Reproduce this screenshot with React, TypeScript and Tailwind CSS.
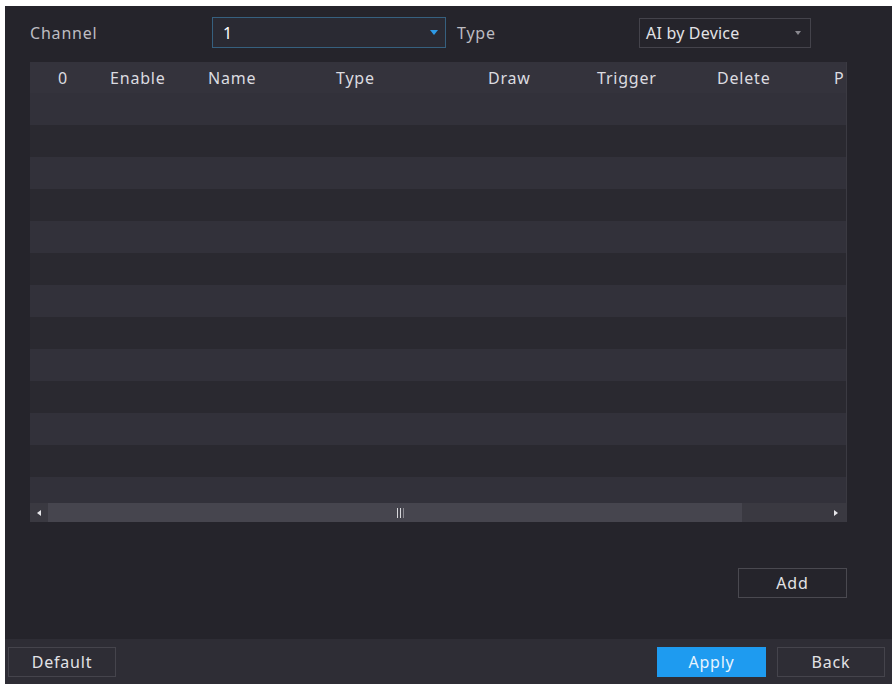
import React from 'react';

const columns = [
  { label: '0', className: 'w-[80px] pl-[28px]' },
  { label: 'Enable', className: 'w-[98px]' },
  { label: 'Name', className: 'w-[128px]' },
  { label: 'Type', className: 'w-[152px]' },
  { label: 'Draw', className: 'w-[109px]' },
  { label: 'Trigger', className: 'w-[120px]' },
  { label: 'Delete', className: 'w-[117px]' },
  { label: 'P', className: 'flex-1 overflow-hidden' },
];

const rows = Array.from({ length: 13 });

const App = () => {
  return (
    <div
      className="w-[895px] h-[684px] bg-white pt-[6px] pl-[5px] pr-[3px] overflow-hidden"
      style={{ fontFamily: '"Noto Sans", "Open Sans", sans-serif' }}
    >
      <div className="h-full bg-[#25242b] flex flex-col">
        {/* filter row */}
        <div className="flex items-center h-[31px] mt-[11px] text-[16px] tracking-[0.8px]">
          <div className="w-[207px] pl-[25px] text-[#bdbcc2]">Channel</div>
          <div className="w-[234px] h-[31px] border border-[#36607f] bg-[#2a2a33] flex items-center justify-between pl-[10px] pr-[7px]">
            <span className="text-white">1</span>
            <span className="w-0 h-0 border-l-[4px] border-r-[4px] border-t-[5px] border-l-transparent border-r-transparent border-t-[#2e9ae6]" />
          </div>
          <div className="w-[193px] pl-[11px] text-[#bdbcc2]">Type</div>
          <div className="w-[172px] h-[30px] border border-[#44434b] flex items-center justify-between pl-[6px] pr-[9px] text-[16px] tracking-[0.2px] text-[#e2e2e6]">
            <span>AI by Device</span>
            <span className="w-0 h-0 border-l-[3px] border-r-[3px] border-t-[4px] border-l-transparent border-r-transparent border-t-[#8a8990]" />
          </div>
        </div>

        {/* table */}
        <div className="ml-[25px] mt-[14px] w-[817px] h-[460px] border-r border-[#3b3a42] flex flex-col overflow-hidden">
          <div className="flex items-center h-[31px] bg-[#34333c] text-[16px] tracking-[0.8px] text-[#dcdce0] shrink-0">
            {columns.map((c) => (
              <div key={c.label} className={c.className}>
                {c.label}
              </div>
            ))}
          </div>
          <div className="flex-1 flex flex-col overflow-hidden">
            {rows.map((_, i) => (
              <div
                key={i}
                className={`h-[32px] shrink-0 ${i % 2 === 0 ? 'bg-[#32313a]' : 'bg-[#2a2930]'}`}
              />
            ))}
          </div>
          {/* horizontal scrollbar */}
          <div className="h-[19px] shrink-0 flex items-center bg-[#3a3941]">
            <div className="w-[18px] flex justify-center">
              <span className="w-0 h-0 border-t-[3px] border-b-[3px] border-r-[4px] border-t-transparent border-b-transparent border-r-[#e6e6ea]" />
            </div>
            <div className="w-[694px] h-full bg-[#46454e] flex items-center justify-center">
              <div className="flex gap-[2px] ml-[10px]">
                <span className="w-[1px] h-[10px] bg-[#d8d8dc]" />
                <span className="w-[1px] h-[10px] bg-[#d8d8dc]" />
                <span className="w-[1px] h-[10px] bg-[#8a8990]" />
              </div>
            </div>
            <div className="flex-1" />
            <div className="w-[20px] flex justify-center">
              <span className="w-0 h-0 border-t-[3px] border-b-[3px] border-l-[4px] border-t-transparent border-b-transparent border-l-[#e6e6ea]" />
            </div>
          </div>
        </div>

        {/* add */}
        <div className="flex justify-end mt-[46px] pr-[45px]">
          <button className="w-[109px] h-[30px] border border-[#4a4950] text-[16px] tracking-[0.8px] text-[#e2e2e6]">
            Add
          </button>
        </div>

        {/* bottom bar */}
        <div className="mt-auto h-[45px] bg-[#2e2d35] flex items-center pl-[3px] pr-[7px] text-[16px] tracking-[0.8px]">
          <button className="w-[108px] h-[30px] border border-[#45444c] text-[#e2e2e6]">
            Default
          </button>
          <div className="flex-1" />
          <button className="w-[109px] h-[30px] bg-[#1e9bf0] text-[#e8f4fe]">
            Apply
          </button>
          <button className="w-[108px] h-[30px] ml-[11px] border border-[#45444c] text-[#e2e2e6]">
            Back
          </button>
        </div>
      </div>
    </div>
  );
};

export default App;
